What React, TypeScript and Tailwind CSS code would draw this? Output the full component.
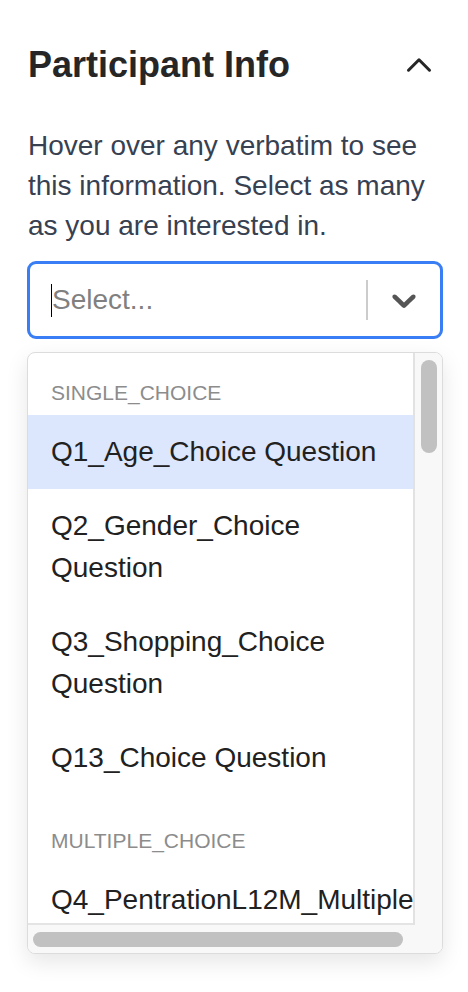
import React from 'react';

type Group = {
  label: string;
  options: string[];
};

const groups: Group[] = [
  {
    label: 'single_choice',
    options: [
      'Q1_Age_Choice Question',
      'Q2_Gender_Choice Question',
      'Q3_Shopping_Choice Question',
      'Q13_Choice Question',
    ],
  },
  {
    label: 'multiple_choice',
    options: ['Q4_PentrationL12M_Multiple Choice Question'],
  },
];

function ChevronDown() {
  // react-select style filled chevron
  return (
    <svg width="40" height="40" viewBox="0 0 20 20" className="fill-[#555555]">
      <path d="M4.516 7.548c0.436-0.446 1.043-0.481 1.576 0l3.908 3.747 3.908-3.747c0.533-0.481 1.141-0.446 1.574 0 0.436 0.445 0.408 1.197 0 1.615-0.406 0.418-4.695 4.502-4.695 4.502-0.217 0.223-0.502 0.335-0.787 0.335s-0.57-0.112-0.789-0.335c0 0-4.287-4.084-4.695-4.502s-0.436-1.17 0-1.615z" />
    </svg>
  );
}

function ChevronUp() {
  return (
    <svg
      width="42"
      height="42"
      viewBox="0 0 24 24"
      fill="none"
      stroke="#262626"
      strokeWidth="1.75"
      strokeLinecap="round"
      strokeLinejoin="round"
    >
      <path d="m18 15-6-6-6 6" />
    </svg>
  );
}

export default function App() {
  const highlighted = 'Q1_Age_Choice Question';

  return (
    <div className="w-[468px] min-h-screen bg-white pl-[27px] pr-[25px] font-['Liberation_Sans',Arial,Helvetica,sans-serif]">
      {/* Header */}
      <div className="pt-[43px] pl-px pr-[3px] flex items-center justify-between">
        <h2 className="text-[36px] leading-[44px] font-bold text-[#262626]">Participant Info</h2>
        <ChevronUp />
      </div>

      <p className="mt-[39px] pl-px text-[28px] leading-[40px] text-[#374151]">
        Hover over any verbatim to see this information. Select as many as you are interested in.
      </p>

      {/* Select control */}
      <div className="mt-[15px] h-[78px] border-[3px] border-[#3a7ef5] rounded-[9px] bg-white flex items-center">
        <div className="flex-1 flex items-center pl-[21px]">
          <span className="w-px h-[33px] bg-black" />
          <span className="text-[28px] leading-[40px] text-[#808080]">Select...</span>
        </div>
        <span className="w-[2px] h-[40px] bg-[#cccccc]" />
        <div className="px-[16px] flex items-center">
          <ChevronDown />
        </div>
      </div>

      {/* Menu */}
      <div className="mt-[13px] border border-[#dcdcdc] rounded-[8px] overflow-hidden bg-white shadow-[0_8px_22px_rgba(0,0,0,0.1)] flex flex-col">
        <div className="flex h-[572px]">
          <div className="flex-1 min-w-0 overflow-hidden border-b-2 border-[#e4e4e4] pt-[8px]">
            {groups.map((g) => (
              <div key={g.label} className="py-[14px]">
                <div className="pt-[3px] mb-[7px] px-[23px] text-[21px] leading-[30px] uppercase text-[#8c8c8c]">
                  {g.label}
                </div>
                {g.options.map((o) => (
                  <div
                    key={o}
                    className={
                      'px-[23px] py-[16px] text-[28px] leading-[42px] text-[#212121] ' +
                      (o === highlighted ? 'bg-[#dce6fd]' : 'bg-white')
                    }
                  >
                    {o}
                  </div>
                ))}
              </div>
            ))}
          </div>
          <div className="w-[29px] shrink-0 border-l-2 border-[#e2e2e2] bg-[#f8f8f8] pt-[7px] flex justify-center">
            <div className="w-[16px] h-[93px] rounded-full bg-[#c1c1c1]" />
          </div>
        </div>
        <div className="h-[28px] bg-[#f8f8f8] pt-[7px] pl-[5px]">
          <div className="w-[370px] h-[15px] rounded-full bg-[#c1c1c1]" />
        </div>
      </div>
    </div>
  );
}
